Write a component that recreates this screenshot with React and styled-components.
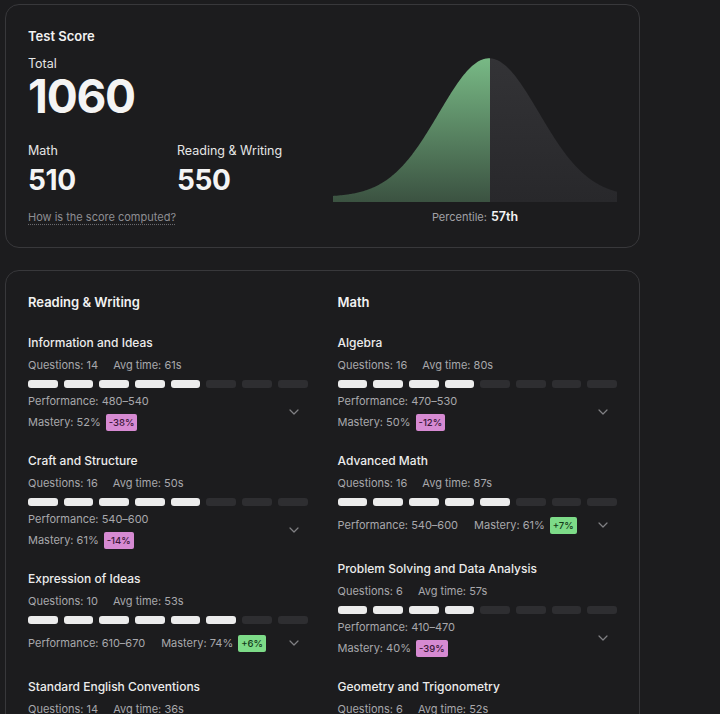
import React from 'react'
import styled, { createGlobalStyle } from 'styled-components'

const GlobalStyle = createGlobalStyle`
    html, body {
        margin: 0;
        padding: 0;
        background: #1c1c1e;
        overflow: hidden;
    }
    body {
        font-family: Inter, "Noto Sans", "Liberation Sans", sans-serif;
        color: #ececec;
        -webkit-font-smoothing: antialiased;
    }
`

const Page = styled.div`
    display: flex;
    flex-direction: column;
    gap: 22px;
    width: 635px;
    padding: 4px 0 0 5px;
`

const Card = styled.section`
    border: 1px solid #38383b;
    border-radius: 14px;
    padding: 22px;
    background: #1c1c1e;
`

const ScoreCard = styled(Card)`
    display: flex;
    justify-content: space-between;
`

const ScoreColumn = styled.div`
    display: flex;
    flex-direction: column;
`

const CardTitle = styled.h2`
    margin: 0;
    font-size: 13px;
    line-height: 18px;
    font-weight: 600;
    color: #f2f2f2;
`

const Label = styled.div`
    font-size: 12.5px;
    line-height: 18px;
    color: #e6e6e6;
    margin-top: ${p => p.$top || 0}px;
`

const BigNumber = styled.div`
    font-size: ${p => p.$size}px;
    line-height: ${p => p.$line}px;
    font-weight: 700;
    letter-spacing: ${p => p.$spacing}px;
    color: #f4f4f4;
    margin-top: ${p => p.$top || 0}px;
`

const SubScores = styled.div`
    display: grid;
    grid-template-columns: 149px auto;
    margin-top: 23px;
`

const HelpLink = styled.a`
    margin-top: 13px;
    font-size: 11px;
    line-height: 16px;
    color: #8e8e93;
    text-decoration: underline dotted #6a6a6e;
    text-underline-offset: 3px;
    cursor: pointer;
`

const ChartColumn = styled.div`
    width: 284px;
    display: flex;
    flex-direction: column;
    align-items: center;
    justify-content: flex-end;
`

const PercentileText = styled.div`
    margin-top: 5px;
    font-size: 11px;
    line-height: 16px;
    color: #a1a1a6;

    strong {
        margin-left: 4px;
        font-size: 12.5px;
        font-weight: 600;
        color: #f4f4f4;
    }
`

const BreakdownGrid = styled.div`
    display: grid;
    grid-template-columns: 1fr 1fr;
    column-gap: 30px;
`

const Column = styled.div`
    display: flex;
    flex-direction: column;
    gap: 22px;
`

const ColumnHeader = styled(CardTitle)`
    margin-bottom: 2px;
`

const Skill = styled.div`
    display: flex;
    flex-direction: column;
`

const SkillName = styled.div`
    font-size: 12px;
    line-height: 16px;
    font-weight: 500;
    color: #ececec;
`

const Meta = styled.div`
    display: flex;
    gap: ${p => p.$gap || 0}px;
    font-size: 11px;
    line-height: 16px;
    color: #a8a8ac;
    margin-top: ${p => p.$top || 0}px;
`

const Segments = styled.div`
    display: flex;
    gap: 6px;
    margin-top: 7px;
`

const Segment = styled.span`
    flex: 1;
    height: 8px;
    border-radius: 3px;
    background: ${p => (p.$on ? '#ececec' : '#2e2e31')};
`

const ResultRow = styled.div`
    display: flex;
    align-items: center;
    justify-content: space-between;
    margin-top: 5px;
    min-height: 28px;
`

const ResultItems = styled.div`
    display: flex;
    flex-direction: ${p => (p.$stacked ? 'column' : 'row')};
    align-items: ${p => (p.$stacked ? 'flex-start' : 'center')};
    gap: ${p => (p.$stacked ? '4px' : '16px')};
`

const MasteryLine = styled.div`
    display: flex;
    align-items: center;
    gap: 5px;
    height: 18px;
    font-size: 11px;
    color: #a8a8ac;
`

const Badge = styled.span`
    display: inline-block;
    height: 17px;
    line-height: 17px;
    padding: 0 3px;
    border-radius: 2px;
    font-size: 9.5px;
    font-weight: 500;
    background: ${p => (p.$up ? '#7ddb88' : '#d68ad2')};
    color: ${p => (p.$up ? '#133a19' : '#3b1639')};
`

const ExpandButton = styled.button`
    width: 28px;
    height: 28px;
    display: flex;
    align-items: center;
    justify-content: center;
    border: none;
    background: transparent;
    padding: 0;
    cursor: pointer;
`

const Chevron = () => (
    <svg width="10" height="6" viewBox="0 0 10 6" fill="none">
        <polyline points="1,1 5,5 9,1" stroke="#808084" strokeWidth="1.2" strokeLinecap="round" strokeLinejoin="round" />
    </svg>
)

// bell curve: gaussian on a small floor, peak sits near the percentile split
const W = 284
const H = 150
const BASE = 148
const PEAK_X = 156
const curveY = x => {
    const d = (x - PEAK_X) / 50
    return BASE - (5 + 138.7 * Math.exp(-(d * d) / 2))
}
const curvePath = (from, to) => {
    let d = `M${from},${BASE}`
    for (let x = from; x <= to; x += 1) d += ` L${x},${curveY(x).toFixed(2)}`
    d += ` L${to},${curveY(to).toFixed(2)} L${to},${BASE} Z`
    return d
}

const BellCurve = ({ split }) => (
    <svg width={W} height={H} viewBox={`0 0 ${W} ${H}`}>
        <defs>
            <linearGradient id="greenFill" x1="0" y1="0" x2="0" y2="1">
                <stop offset="0" stopColor="#78b985" />
                <stop offset="1" stopColor="#3b5241" />
            </linearGradient>
            <linearGradient id="darkFill" x1="0" y1="0" x2="0" y2="1">
                <stop offset="0" stopColor="#333336" />
                <stop offset="1" stopColor="#28282b" />
            </linearGradient>
        </defs>
        <path d={curvePath(0, split)} fill="url(#greenFill)" />
        <path d={curvePath(split, W)} fill="url(#darkFill)" />
    </svg>
)

const readingSkills = [
    { name: 'Information and Ideas', questions: 14, time: '61s', filled: 5, perf: '480–540', mastery: '52%', delta: '-38%', stacked: true },
    { name: 'Craft and Structure', questions: 16, time: '50s', filled: 5, perf: '540–600', mastery: '61%', delta: '-14%', stacked: true },
    { name: 'Expression of Ideas', questions: 10, time: '53s', filled: 6, perf: '610–670', mastery: '74%', delta: '+6%' },
    { name: 'Standard English Conventions', questions: 14, time: '36s', filled: 4, perf: '500–560', mastery: '55%', delta: '-20%', stacked: true },
]

const mathSkills = [
    { name: 'Algebra', questions: 16, time: '80s', filled: 4, perf: '470–530', mastery: '50%', delta: '-12%', stacked: true },
    { name: 'Advanced Math', questions: 16, time: '87s', filled: 5, perf: '540–600', mastery: '61%', delta: '+7%' },
    { name: 'Problem Solving and Data Analysis', questions: 6, time: '57s', filled: 4, perf: '410–470', mastery: '40%', delta: '-39%', stacked: true },
    { name: 'Geometry and Trigonometry', questions: 6, time: '52s', filled: 4, perf: '450–510', mastery: '45%', delta: '-25%', stacked: true },
]

const SkillBlock = ({ skill }) => (
    <Skill>
        <SkillName>{skill.name}</SkillName>
        <Meta $gap={15} $top={6}>
            <span>Questions: {skill.questions}</span>
            <span>Avg time: {skill.time}</span>
        </Meta>
        <Segments>
            {Array.from({ length: 8 }, (_, i) => (
                <Segment key={i} $on={i < skill.filled} />
            ))}
        </Segments>
        <ResultRow>
            <ResultItems $stacked={skill.stacked}>
                <Meta>Performance: {skill.perf}</Meta>
                <MasteryLine>
                    Mastery: {skill.mastery}
                    <Badge $up={skill.delta.startsWith('+')}>{skill.delta}</Badge>
                </MasteryLine>
            </ResultItems>
            <ExpandButton aria-label="Expand">
                <Chevron />
            </ExpandButton>
        </ResultRow>
    </Skill>
)

export default function App() {
    return (
        <>
            <GlobalStyle />
            <Page>
                <ScoreCard>
                    <ScoreColumn>
                        <CardTitle>Test Score</CardTitle>
                        <Label $top={10}>Total</Label>
                        <BigNumber $size={46} $line={46} $spacing={-1.2} $top={0}>1060</BigNumber>
                        <SubScores>
                            <div>
                                <Label>Math</Label>
                                <BigNumber $size={28} $line={32} $spacing={-0.4} $top={4}>510</BigNumber>
                            </div>
                            <div>
                                <Label>Reading &amp; Writing</Label>
                                <BigNumber $size={28} $line={32} $spacing={-0.4} $top={4}>550</BigNumber>
                            </div>
                        </SubScores>
                        <HelpLink>How is the score computed?</HelpLink>
                    </ScoreColumn>
                    <ChartColumn>
                        <BellCurve split={157} />
                        <PercentileText>
                            Percentile:<strong>57th</strong>
                        </PercentileText>
                    </ChartColumn>
                </ScoreCard>

                <Card>
                    <BreakdownGrid>
                        <Column>
                            <ColumnHeader>Reading &amp; Writing</ColumnHeader>
                            {readingSkills.map(s => (
                                <SkillBlock key={s.name} skill={s} />
                            ))}
                        </Column>
                        <Column>
                            <ColumnHeader>Math</ColumnHeader>
                            {mathSkills.map(s => (
                                <SkillBlock key={s.name} skill={s} />
                            ))}
                        </Column>
                    </BreakdownGrid>
                </Card>
            </Page>
        </>
    )
}
